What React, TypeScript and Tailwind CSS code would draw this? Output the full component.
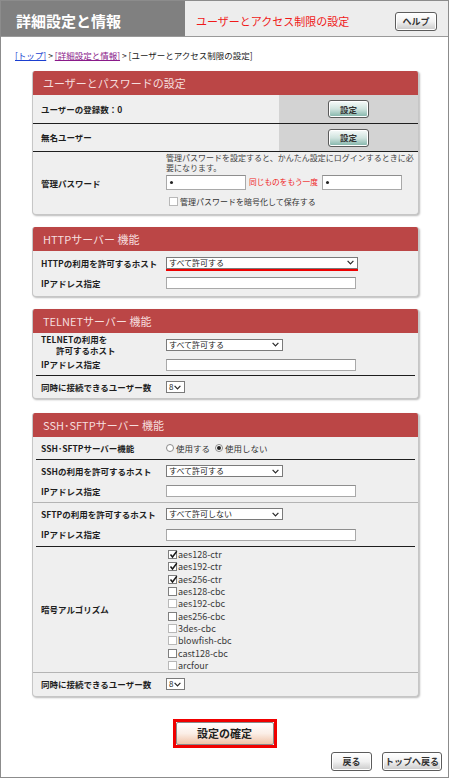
import React from 'react'

const Select = ({ text, w }: { text: string; w: string }) => (
  <div className={`flex h-[12px] items-center justify-between border border-[#7a7a7a] bg-white pl-[2px] pr-[3px] text-[8px] leading-none text-[#222] ${w}`}>
    <span>{text}</span>
    <svg width="7" height="5" viewBox="0 0 7 5">
      <path d="M0.6 0.8 L3.5 3.9 L6.4 0.8" fill="none" stroke="#2a2a2a" strokeWidth="1.2" />
    </svg>
  </div>
)

const Input = ({ w, dot }: { w: string; dot?: boolean }) => (
  <div className={`flex items-center border border-[#a9a9a9] border-t-[#8e8e8e] bg-white pl-[3px] ${w}`}>
    {dot && <span className="block h-[3px] w-[3px] rounded-full bg-[#222]" />}
  </div>
)

const Check = ({ checked, faint }: { checked?: boolean; faint?: boolean }) => (
  <span className={`relative inline-block h-[9px] w-[9px] border bg-white ${faint ? 'border-[#b8b8b8]' : 'border-[#7f7f7f]'}`}>
    {checked && (
      <svg className="absolute left-[0px] top-[-1px]" width="9" height="9" viewBox="0 0 9 9">
        <path d="M1.5 4.5 L3.5 7 L7.8 1.2" fill="none" stroke="#1a1a1a" strokeWidth="1.5" />
      </svg>
    )}
  </span>
)

const Label = ({ children }: { children: React.ReactNode }) => (
  <div className="w-[133px] shrink-0 pl-[8px] text-[8.5px] font-bold leading-[11px] text-[#1e1e1e]">{children}</div>
)

const Section = ({ title, children }: { title: string; children: React.ReactNode }) => (
  <div className="ml-[31px] w-[387px] overflow-hidden rounded-t-[3px] rounded-b-[4px] border-x border-b border-[#c6c6c6] bg-[#efefef] shadow-[1px_1px_2px_rgba(0,0,0,0.28)]">
    <div className="flex h-[24px] items-center bg-[#bb4646] pl-[10px] text-[11px] text-[#f6dede]">{title}</div>
    {children}
  </div>
)

const GrayButton = ({ label, w }: { label: string; w: string }) => (
  <div className={`flex h-[19px] items-center justify-center rounded-[3px] border border-[#5c5c5c] bg-gradient-to-b from-white via-[#f1f1f1] to-[#c9c9c9] text-[9px] font-bold text-[#333] shadow-[inset_0_0_0_1px_#ffffff] ${w}`}>
    {label}
  </div>
)

const TealButton = () => (
  <div className="flex h-[18px] w-[41px] items-center justify-center rounded-[3px] border border-[#5a5a5a] bg-gradient-to-b from-[#f7fbfa] via-[#cfe3de] to-[#7fb3a8] text-[8.5px] font-bold text-[#333] shadow-[inset_0_0_0_1px_#ffffff]">
    設定
  </div>
)

const ciphers: [string, boolean, boolean][] = [
  ['aes128-ctr', true, false],
  ['aes192-ctr', true, false],
  ['aes256-ctr', true, false],
  ['aes128-cbc', false, false],
  ['aes192-cbc', false, true],
  ['aes256-cbc', false, false],
  ['3des-cbc', false, true],
  ['blowfish-cbc', false, true],
  ['cast128-cbc', false, false],
  ['arcfour', false, true],
]

export default function App() {
  return (
    <div className="h-[779px] w-[450px] bg-white font-['Noto_Sans_CJK_JP','Liberation_Sans',sans-serif]">
      <div className="h-[778px] w-[449px] border border-[#8c8c8c]">
        {/* header */}
        <div className="flex h-[36px] border-b border-[#9a9a9a]">
          <div className="flex w-[184px] items-center bg-[#808080] pl-[15px] pt-[5px] text-[15px] font-bold text-white">
            詳細設定と情報
          </div>
          <div className="flex flex-1 items-center justify-between bg-[#ededed] pl-[11px] pr-[11px] pt-[6px]">
            <span className="text-[11px] text-[#f01a1a]">ユーザーとアクセス制限の設定</span>
            <GrayButton label="ヘルプ" w="w-[42px]" />
          </div>
        </div>

        {/* breadcrumb */}
        <div className="pl-[14px] pt-[13px] text-[8.5px] leading-[10px] text-[#222]">
          <span className="text-[#1b3fd0] underline">[トップ]</span>
          <span> &gt; </span>
          <span className="text-[#8a1a8a] underline">[詳細設定と情報]</span>
          <span> &gt; [ユーザーとアクセス制限の設定]</span>
        </div>

        <div className="mt-[11px] flex flex-col gap-[12px]">
          {/* section 1 */}
          <Section title="ユーザーとパスワードの設定">
            <div className="flex h-[29px] border-b border-[#1e1e1e]">
              <div className="flex w-[246px] items-center">
                <Label>ユーザーの登録数：0</Label>
              </div>
              <div className="flex flex-1 items-center justify-center bg-[#d3d3d3]">
                <TealButton />
              </div>
            </div>
            <div className="flex h-[28px] border-b border-[#1e1e1e]">
              <div className="flex w-[246px] items-center">
                <Label>無名ユーザー</Label>
              </div>
              <div className="flex flex-1 items-center justify-center bg-[#d3d3d3]">
                <TealButton />
              </div>
            </div>
            <div className="flex h-[62px] items-center">
              <Label>管理パスワード</Label>
              <div className="flex h-full flex-col">
                <div className="w-[250px] pt-[1px] text-[8px] leading-[10px] text-[#444]">
                  管理パスワードを設定すると、かんたん設定にログインするときに必要になります。
                </div>
                <div className="mt-[1px] flex h-[16px] items-center">
                  <Input w="h-[15px] w-[80px]" dot />
                  <span className="ml-[3px] mr-[3px] w-[70px] whitespace-nowrap text-[7.7px] text-[#f01a1a]">同じものをもう一度</span>
                  <Input w="h-[15px] w-[80px]" dot />
                </div>
                <div className="mt-[7px] flex items-center gap-[2px] pl-[3px] text-[8px] leading-none text-[#333]">
                  <Check faint />
                  <span>管理パスワードを暗号化して保存する</span>
                </div>
              </div>
            </div>
          </Section>

          {/* section 2 */}
          <Section title="HTTPサーバー 機能">
            <div className="flex h-[21px] items-center pt-[4px]">
              <Label>HTTPの利用を許可するホスト</Label>
              <div className="flex flex-col">
                <Select text="すべて許可する" w="w-[192px]" />
                <div className="h-[2px] w-[192px] bg-[#ee0000]" />
              </div>
            </div>
            <div className="flex h-[22px] items-center">
              <Label>IPアドレス指定</Label>
              <Input w="h-[12px] w-[190px]" />
            </div>
            <div className="h-[2px]" />
          </Section>

          {/* section 3 */}
          <Section title="TELNETサーバー 機能">
            <div className="flex h-[23px] items-center">
              <Label>
                TELNETの利用を
                <br />
                <span className="pl-[15px]">許可するホスト</span>
              </Label>
              <Select text="すべて許可する" w="w-[117px]" />
            </div>
            <div className="mx-[3px] flex h-[20px] items-center border-b border-[#1e1e1e] pb-[2px]">
              <div className="-ml-[3px]">
                <Label>IPアドレス指定</Label>
              </div>
              <Input w="h-[12px] w-[190px]" />
            </div>
            <div className="flex h-[20px] items-center pt-[2px]">
              <Label>同時に接続できるユーザー数</Label>
              <Select text="8" w="w-[19px] h-[10px]" />
            </div>
            <div className="h-[2px]" />
          </Section>

          {/* section 4 */}
          <div className="mt-[2px]">
            <Section title="SSH･SFTPサーバー 機能">
              <div className="mx-[3px] flex h-[23px] items-center border-b border-[#1e1e1e]">
                <div className="-ml-[3px]">
                  <Label>SSH･SFTPサーバー機能</Label>
                </div>
                <div className="flex items-center text-[8.5px] text-[#333]">
                  <span className="mr-[2px] inline-block h-[8px] w-[8px] rounded-full border border-[#8a8a8a] bg-white" />
                  <span>使用する</span>
                  <span className="ml-[5px] mr-[2px] flex h-[8px] w-[8px] items-center justify-center rounded-full border border-[#8a8a8a] bg-white">
                    <span className="block h-[4px] w-[4px] rounded-full bg-[#222]" />
                  </span>
                  <span>使用しない</span>
                </div>
              </div>
              <div className="flex h-[20px] items-center pt-[2px]">
                <Label>SSHの利用を許可するホスト</Label>
                <Select text="すべて許可する" w="w-[117px]" />
              </div>
              <div className="flex h-[23px] items-center border-b border-[#b4b4b4]">
                <Label>IPアドレス指定</Label>
                <Input w="h-[12px] w-[190px]" />
              </div>
              <div className="flex h-[20px] items-center pt-[2px]">
                <Label>SFTPの利用を許可するホスト</Label>
                <Select text="すべて許可しない" w="w-[117px]" />
              </div>
              <div className="mx-[3px] flex h-[24px] items-center border-b border-[#1e1e1e]">
                <div className="-ml-[3px]">
                  <Label>IPアドレス指定</Label>
                </div>
                <Input w="h-[12px] w-[190px]" />
              </div>
              <div className="flex h-[126px] items-center border-b border-[#b4b4b4]">
                <Label>暗号アルゴリズム</Label>
                <div className="flex flex-col pt-[1px]">
                  {ciphers.map(([name, on, faint]) => (
                    <div key={name} className="flex h-[12.3px] items-center gap-[1px] pl-[2px] text-[9px] leading-none text-[#3a3a3a]">
                      <Check checked={on} faint={faint} />
                      <span>{name}</span>
                    </div>
                  ))}
                </div>
              </div>
              <div className="flex h-[22px] items-center">
                <Label>同時に接続できるユーザー数</Label>
                <Select text="8" w="w-[19px] h-[10px]" />
              </div>
              <div className="h-[1px]" />
            </Section>
          </div>
        </div>

        {/* confirm */}
        <div className="mt-[22px] flex justify-center">
          <div className="h-[29px] w-[104px] border-[3px] border-[#f00000]">
            <div className="flex h-full w-full items-center justify-center rounded-[2px] border border-[#8a8a8a] bg-gradient-to-b from-white via-[#fbeee6] to-[#efc3a8] text-[11px] font-bold text-[#222]">
              設定の確定
            </div>
          </div>
        </div>

        {/* bottom buttons */}
        <div className="mt-[4px] flex justify-end gap-[10px] pr-[6px]">
          <GrayButton label="戻る" w="w-[41px]" />
          <GrayButton label="トップへ戻る" w="w-[60px]" />
        </div>
      </div>
    </div>
  )
}
